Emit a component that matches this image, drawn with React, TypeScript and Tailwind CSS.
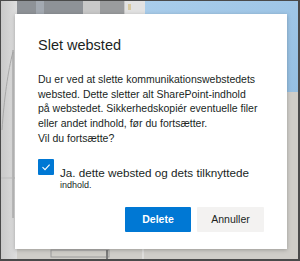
import React from "react";

const Backdrop: React.FC = () => (
  <svg
    className="absolute inset-0"
    width="300"
    height="261"
    viewBox="0 0 300 261"
    aria-hidden="true"
  >
    <defs>
      <linearGradient id="sky" x1="0" y1="0" x2="1" y2="1">
        <stop offset="0" stopColor="#a9cdeb" />
        <stop offset="1" stopColor="#95bfe2" />
      </linearGradient>
      <linearGradient id="side" x1="0" y1="0" x2="1" y2="0">
        <stop offset="0" stopColor="#c9c9c9" />
        <stop offset="1" stopColor="#dedede" />
      </linearGradient>
    </defs>
    <rect width="300" height="261" fill="#4a4a4a" />
    <rect x="1" y="1" width="297" height="258" fill="#cfcdc8" />
    <rect x="1" y="1" width="16" height="258" fill="url(#side)" />
    <rect x="145" y="1" width="153" height="91" fill="url(#sky)" />
    <rect x="17" y="1" width="128" height="14" fill="#c8c8c8" />
    <rect x="17" y="1" width="66" height="14" fill="#8e9297" />
    <rect x="36" y="1" width="8" height="14" fill="#a3a9b1" />
    <rect x="100" y="1" width="24" height="14" fill="#9a9c9e" />
    <rect x="125" y="1" width="20" height="14" fill="#e2e2e2" />
    <rect x="128" y="4" width="3" height="6" fill="#d8c9a0" />
    <line x1="13" y1="50" x2="13" y2="218" stroke="#9e9e9e" strokeWidth="1" />
    <path d="M13 52 C 8 70, 4 100, 2 130" stroke="#a8a8a8" fill="none" />
    <line x1="1" y1="178" x2="16" y2="178" stroke="#bdbdbd" />
    <line x1="143" y1="249" x2="143" y2="259" stroke="#eeeeee" />
    <rect x="51" y="250" width="58" height="7" fill="none" stroke="#9a9a9a" />
    <line x1="107" y1="250" x2="107" y2="259" stroke="#7a7a7a" strokeWidth="2" />
  </svg>
);

export default function App() {
  return (
    <div
      className="relative w-[300px] h-[261px] overflow-hidden"
      style={{ fontFamily: '"Liberation Sans", Arial, sans-serif' }}
    >
      <Backdrop />
      <div className="relative pt-[14px] pl-[15px]">
        <div className="w-[272px] h-[235px] bg-white shadow-[0_1px_4px_rgba(0,0,0,0.25)] px-[23px] pt-[21px] flex flex-col">
          <h1 className="text-[14.5px] leading-[20px] text-[#201f1e]">
            Slet websted
          </h1>
          <p className="mt-[17px] w-[220px] text-[10.5px] leading-[14.7px] text-[#201f1e]">
            Du er ved at slette kommunikationswebstedets websted. Dette sletter
            alt SharePoint-indhold på webstedet. Sikkerhedskopiér eventuelle
            filer eller andet indhold, før du fortsætter.
            <br />
            Vil du fortsætte?
          </p>
          <label className="mt-[13px] flex gap-[6px]">
            <span className="w-[16px] h-[16px] shrink-0 bg-[#0078d4] rounded-[1px] flex items-center justify-center">
              <svg width="10" height="10" viewBox="0 0 10 10">
                <path
                  d="M1.5 5.2 L4 7.6 L8.6 2.6"
                  stroke="white"
                  strokeWidth="1.1"
                  fill="none"
                />
              </svg>
            </span>
            <span className="pt-[7px] text-[#201f1e]">
              <span className="block text-[11.7px] leading-[14px]">
                Ja. dette websted og dets tilknyttede
              </span>
              <span className="block text-[9px] leading-[11px]">indhold.</span>
            </span>
          </label>
          <div className="mt-auto mb-[17px] flex justify-end gap-[6px]">
            <button className="w-[66px] h-[25px] bg-[#0078d4] text-white text-[10.5px] font-bold rounded-[1px]">
              Delete
            </button>
            <button className="w-[67px] h-[25px] bg-[#f3f2f1] text-[#201f1e] text-[10.5px] rounded-[1px]">
              Annuller
            </button>
          </div>
        </div>
      </div>
    </div>
  );
}
